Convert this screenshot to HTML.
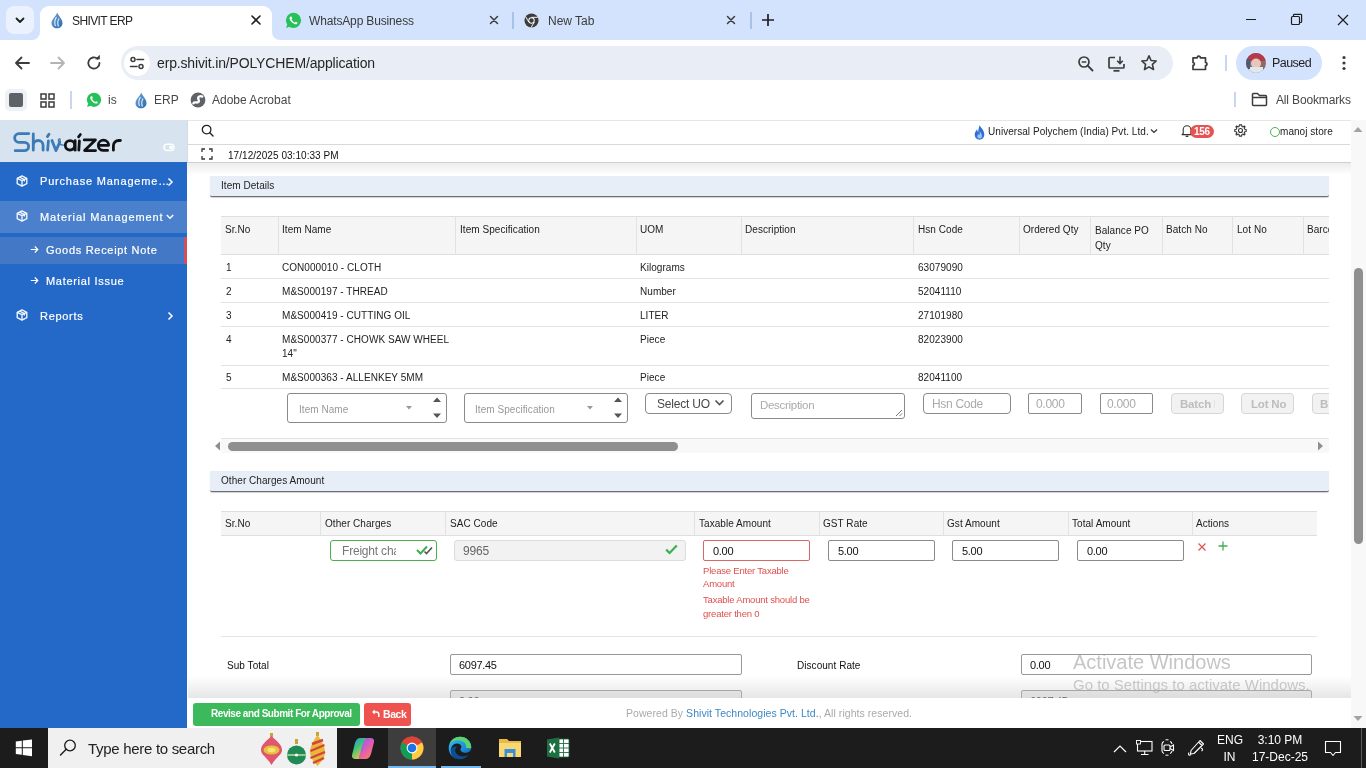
<!DOCTYPE html>
<html><head><meta charset="utf-8">
<style>
*{box-sizing:border-box;margin:0;padding:0}
html,body{width:1366px;height:768px;overflow:hidden;background:#fff;font-family:"Liberation Sans",sans-serif;position:relative;-webkit-font-smoothing:antialiased;will-change:transform}
.a{position:absolute}
#tabs{left:0;top:0;width:1366px;height:40px;background:#d3e3fd}
#toolbar{left:0;top:40px;width:1366px;height:45px;background:#fff}
#bmbar{left:0;top:85px;width:1366px;height:35px;background:#fff}
.ctext{color:#1f1f1f;font-size:13px;white-space:nowrap;line-height:15px}
#sidebar{left:0;top:120px;width:187px;height:608px;background:#2468c8;overflow:hidden}
.nav{color:#fff;font-size:11px;white-space:nowrap;line-height:14px;letter-spacing:0.75px;-webkit-text-stroke:0.2px #fff}
#main{left:187px;top:120px;width:1163px;height:608px;background:#fff;overflow:hidden}
#vscroll{left:1350px;top:120px;width:16px;height:608px;background:#f1f1f1}
#taskbar{left:0;top:728px;width:1366px;height:40px;background:#1c1c1c}
.t{font-size:10px;color:#222;white-space:nowrap;letter-spacing:0.05px;line-height:13px}
</style></head><body>
<!-- ===== CHROME TAB STRIP ===== -->
<div id="tabs" class="a">
  <div class="a" style="left:6px;top:6px;width:28px;height:28px;border-radius:8px;background:#ecf2fd"></div>
  <svg class="a" style="left:13px;top:13px" width="14" height="14" viewBox="0 0 14 14"><path d="M3.5 5.5 L7 9 L10.5 5.5" fill="none" stroke="#1f1f1f" stroke-width="1.8" stroke-linecap="round" stroke-linejoin="round"/></svg>
  <!-- active tab -->
  <div class="a" style="left:40px;top:6px;width:232px;height:34px;background:#fff;border-radius:9px 9px 0 0"></div>
  <div class="a" style="left:32px;top:32px;width:8px;height:8px;background:#fff"></div>
  <div class="a" style="left:32px;top:32px;width:8px;height:8px;background:#d3e3fd;border-radius:0 0 8px 0"></div>
  <div class="a" style="left:272px;top:32px;width:8px;height:8px;background:#fff"></div>
  <div class="a" style="left:272px;top:32px;width:8px;height:8px;background:#d3e3fd;border-radius:0 0 0 8px"></div>
  <svg class="a" style="left:51px;top:12px" width="12" height="17" viewBox="0 0 12 17"><defs><linearGradient id="dg" x1="0" y1="0" x2="1" y2="1"><stop offset="0" stop-color="#6fa3d6"/><stop offset="1" stop-color="#2d6cb0"/></linearGradient></defs><path d="M6.3 0.5 C7 3.5 11.5 7 11.5 11 C11.5 14.2 9.2 16.3 6 16.3 C2.8 16.3 0.5 14.2 0.5 11 C0.5 7.5 5 4 6.3 0.5Z" fill="url(#dg)"/><path d="M5.5 5 C3.5 8 3 10.5 4.5 14 M8 6.5 C6.5 9 6.2 11.5 7.5 14.5" fill="none" stroke="#e8f2fb" stroke-width="1.1"/></svg>
  <div class="a ctext" style="left:72px;top:14px;font-size:12px;letter-spacing:-0.6px;color:#262626">SHIVIT ERP</div>
  <svg class="a" style="left:250px;top:14px" width="12" height="12" viewBox="0 0 12 12"><path d="M2 2 L10 10 M10 2 L2 10" stroke="#1f1f1f" stroke-width="1.6" stroke-linecap="round"/></svg>
  <!-- whatsapp tab -->
  <svg class="a" style="left:285px;top:12px" width="17" height="17" viewBox="0 0 17 17"><circle cx="8.5" cy="8.3" r="7.6" fill="#25c15a"/><path d="M1.2 16 L2.3 12 L5 14.6Z" fill="#25c15a"/><path d="M5.6 4.4 C5 4.6 4.4 5.3 4.5 6.3 C4.7 8.4 7.6 11.7 10.4 12.3 C11.4 12.5 12.2 12 12.4 11.3 L12.4 10.6 L10.8 9.8 L9.9 10.7 C8.6 10.2 7 8.7 6.5 7.3 L7.3 6.4 L6.5 4.6Z" fill="#fff"/></svg>
  <div class="a ctext" style="left:309px;top:14px;font-size:12px;letter-spacing:-0.15px;color:#3a3a3a">WhatsApp Business</div>
  <svg class="a" style="left:488px;top:14px" width="12" height="12" viewBox="0 0 12 12"><path d="M2.5 2.5 L9.5 9.5 M9.5 2.5 L2.5 9.5" stroke="#3c3c3c" stroke-width="1.5" stroke-linecap="round"/></svg>
  <div class="a" style="left:512px;top:12px;width:2px;height:17px;background:#a8c1ea"></div>
  <!-- new tab -->
  <svg class="a" style="left:524px;top:13px" width="15" height="15" viewBox="0 0 16 16"><circle cx="8" cy="8" r="7.5" fill="#3c3c3c"/><circle cx="8" cy="8" r="3.4" fill="#fff"/><circle cx="8" cy="8" r="2.4" fill="#3c3c3c"/><path d="M8 4.6 L14.6 4.6" stroke="#fff" stroke-width="1"/><path d="M5.1 9.7 L1.8 4" stroke="#fff" stroke-width="1"/><path d="M10.9 9.7 L7.6 15.4" stroke="#fff" stroke-width="1"/></svg>
  <div class="a ctext" style="left:548px;top:14px;font-size:12px;color:#3a3a3a">New Tab</div>
  <svg class="a" style="left:725px;top:14px" width="12" height="12" viewBox="0 0 12 12"><path d="M2.5 2.5 L9.5 9.5 M9.5 2.5 L2.5 9.5" stroke="#3c3c3c" stroke-width="1.5" stroke-linecap="round"/></svg>
  <div class="a" style="left:750px;top:12px;width:2px;height:17px;background:#a8c1ea"></div>
  <svg class="a" style="left:761px;top:13px" width="14" height="14" viewBox="0 0 14 14"><path d="M7 1 L7 13 M1 7 L13 7" stroke="#1f1f1f" stroke-width="1.7"/></svg>
  <!-- window controls -->
  <div class="a" style="left:1246px;top:19px;width:10px;height:1px;background:#1f1f1f"></div>
  <svg class="a" style="left:1290px;top:13px" width="13" height="13" viewBox="0 0 13 13"><rect x="1.5" y="3.5" width="8" height="8" fill="none" stroke="#1f1f1f" stroke-width="1.2" rx="1"/><path d="M3.5 3.5 V2 A0.8 0.8 0 0 1 4.3 1.3 H10.8 A0.8 0.8 0 0 1 11.6 2 V8.7 A0.8 0.8 0 0 1 10.8 9.5 H9.5" fill="none" stroke="#1f1f1f" stroke-width="1.2"/></svg>
  <svg class="a" style="left:1336px;top:13px" width="14" height="14" viewBox="0 0 14 14"><path d="M2 2 L12 12 M12 2 L2 12" stroke="#1f1f1f" stroke-width="1.2"/></svg>
</div>
<!-- ===== TOOLBAR ===== -->
<div id="toolbar" class="a">
  <svg class="a" style="left:13px;top:14px" width="18" height="18" viewBox="0 0 18 18"><path d="M16 9 H3 M8.5 3.5 L3 9 L8.5 14.5" fill="none" stroke="#3c3c3c" stroke-width="1.8" stroke-linecap="round" stroke-linejoin="round"/></svg>
  <svg class="a" style="left:49px;top:14px" width="18" height="18" viewBox="0 0 18 18"><path d="M2 9 H15 M9.5 3.5 L15 9 L9.5 14.5" fill="none" stroke="#b4b4b4" stroke-width="1.8" stroke-linecap="round" stroke-linejoin="round"/></svg>
  <svg class="a" style="left:85px;top:14px" width="18" height="18" viewBox="0 0 18 18"><path d="M14.5 9 A5.6 5.6 0 1 1 12.6 4.8" fill="none" stroke="#3c3c3c" stroke-width="1.8" stroke-linecap="round"/><path d="M10.2 4 L14.8 4 L14.8 -0.5 Z" fill="#3c3c3c" transform="translate(0,1.3)"/></svg>
  <div class="a" style="left:121px;top:6px;width:1052px;height:34px;border-radius:17px;background:#e9eef6"></div>
  <div class="a" style="left:124px;top:10px;width:26px;height:26px;border-radius:13px;background:#fff"></div>
  <svg class="a" style="left:129px;top:15px" width="16" height="16" viewBox="0 0 16 16"><circle cx="4" cy="4.5" r="2" fill="none" stroke="#3c3c3c" stroke-width="1.5"/><path d="M8 4.5 H14.5" stroke="#3c3c3c" stroke-width="1.6" stroke-linecap="round"/><circle cx="12" cy="11.5" r="2" fill="none" stroke="#3c3c3c" stroke-width="1.5"/><path d="M1.5 11.5 H8" stroke="#3c3c3c" stroke-width="1.6" stroke-linecap="round"/></svg>
  <div class="a ctext" style="left:157px;top:16px;font-size:14px;letter-spacing:-0.15px;color:#262626">erp.shivit.in/POLYCHEM/application</div>
  <svg class="a" style="left:1077px;top:15px" width="18" height="18" viewBox="0 0 18 18"><circle cx="7" cy="7" r="5" fill="none" stroke="#3c3c3c" stroke-width="1.7"/><path d="M10.7 10.7 L15.5 15.5" stroke="#3c3c3c" stroke-width="1.9" stroke-linecap="round"/><path d="M4.7 7 H9.3" stroke="#3c3c3c" stroke-width="1.5"/></svg>
  <svg class="a" style="left:1107px;top:15px" width="20" height="18" viewBox="0 0 20 18"><path d="M8 2.5 H3 A1 1 0 0 0 2 3.5 V12 A1 1 0 0 0 3 13 H16 A1 1 0 0 0 17 12 V9" fill="none" stroke="#3c3c3c" stroke-width="1.7"/><path d="M13 1.5 V8.5 M10.2 5.8 L13 8.6 L15.8 5.8" fill="none" stroke="#3c3c3c" stroke-width="1.6"/><path d="M6.5 15.8 H12.5" stroke="#3c3c3c" stroke-width="1.8"/></svg>
  <svg class="a" style="left:1140px;top:14px" width="18" height="18" viewBox="0 0 18 18"><path d="M9 1.8 L11.1 6.5 L16.2 7 L12.4 10.4 L13.5 15.5 L9 12.9 L4.5 15.5 L5.6 10.4 L1.8 7 L6.9 6.5 Z" fill="none" stroke="#3c3c3c" stroke-width="1.6" stroke-linejoin="round"/></svg>
  <svg class="a" style="left:1190px;top:13px" width="19" height="19" viewBox="0 0 19 19"><path d="M3 4.8 H7.2 A1.6 1.6 0 0 1 10.4 4.8 H15.5 V9.5 A1.5 1.5 0 0 1 15.5 12.5 V16.5 H3 V12.3 A1.4 1.4 0 0 0 3 9.5 Z" fill="none" stroke="#3c3c3c" stroke-width="1.7" stroke-linejoin="round"/></svg>
  <div class="a" style="left:1225px;top:15px;width:2px;height:16px;background:#c7d7f2"></div>
  <div class="a" style="left:1236px;top:6px;width:86px;height:34px;border-radius:17px;background:#d3e3fd"></div>
  <svg class="a" style="left:1246px;top:13px" width="20" height="20" viewBox="0 0 20 20"><defs><clipPath id="av"><circle cx="10" cy="10" r="10"/></clipPath></defs><g clip-path="url(#av)"><rect width="20" height="20" fill="#8a6b66"/><rect x="0" y="0" width="20" height="8" fill="#b33a48"/><circle cx="10" cy="10.5" r="5" fill="#e8c7b8"/><rect x="3" y="14" width="14" height="7" fill="#dfe6ee"/><rect x="0" y="6" width="4" height="10" fill="#4a5a78"/></g></svg>
  <div class="a ctext" style="left:1272px;top:16px;font-size:12.5px;letter-spacing:-0.55px;color:#1f1f1f">Paused</div>
  <svg class="a" style="left:1340px;top:14px" width="8" height="18" viewBox="0 0 8 18"><circle cx="4" cy="3.5" r="1.6" fill="#3c3c3c"/><circle cx="4" cy="9" r="1.6" fill="#3c3c3c"/><circle cx="4" cy="14.5" r="1.6" fill="#3c3c3c"/></svg>
</div>
<!-- ===== BOOKMARKS BAR ===== -->
<div id="bmbar" class="a">
  <div class="a" style="left:5px;top:4px;width:22px;height:22px;border-radius:5px;background:#eef1f6"></div>
  <div class="a" style="left:9px;top:8px;width:14px;height:14px;border-radius:2px;background:#5f6368"></div>
  <svg class="a" style="left:40px;top:8px" width="15" height="15" viewBox="0 0 15 15"><rect x="1" y="1" width="5" height="5" fill="none" stroke="#3c3c3c" stroke-width="1.5"/><rect x="9" y="1" width="5" height="5" fill="none" stroke="#3c3c3c" stroke-width="1.5"/><rect x="1" y="9" width="5" height="5" fill="none" stroke="#3c3c3c" stroke-width="1.5"/><rect x="9" y="9" width="5" height="5" fill="none" stroke="#3c3c3c" stroke-width="1.5"/></svg>
  <div class="a" style="left:70px;top:6px;width:2px;height:18px;background:#c7d7f2"></div>
  <svg class="a" style="left:86px;top:7px" width="16" height="16" viewBox="0 0 17 17"><circle cx="8.5" cy="8.3" r="7.6" fill="#25c15a"/><path d="M1.2 16 L2.3 12 L5 14.6Z" fill="#25c15a"/><path d="M5.6 4.4 C5 4.6 4.4 5.3 4.5 6.3 C4.7 8.4 7.6 11.7 10.4 12.3 C11.4 12.5 12.2 12 12.4 11.3 L12.4 10.6 L10.8 9.8 L9.9 10.7 C8.6 10.2 7 8.7 6.5 7.3 L7.3 6.4 L6.5 4.6Z" fill="#fff"/></svg>
  <div class="a ctext" style="left:108px;top:8px;font-size:12px;color:#474747">is</div>
  <svg class="a" style="left:135px;top:7px" width="12" height="17" viewBox="0 0 12 17"><path d="M6.3 0.5 C7 3.5 11.5 7 11.5 11 C11.5 14.2 9.2 16.3 6 16.3 C2.8 16.3 0.5 14.2 0.5 11 C0.5 7.5 5 4 6.3 0.5Z" fill="url(#dg)"/><path d="M5.5 5 C3.5 8 3 10.5 4.5 14 M8 6.5 C6.5 9 6.2 11.5 7.5 14.5" fill="none" stroke="#e8f2fb" stroke-width="1.1"/></svg>
  <div class="a ctext" style="left:154px;top:8px;font-size:12px;color:#474747">ERP</div>
  <svg class="a" style="left:190px;top:7px" width="16" height="16" viewBox="0 0 16 16"><circle cx="8" cy="8" r="7.4" fill="#5f6368"/><path d="M12.3 4.6 C10.2 3.6 7.6 4.6 8.3 6.8 C8.9 8.6 9.6 9.8 7.6 10.4 C6 10.8 4.3 9.6 3.4 11.2" fill="none" stroke="#fff" stroke-width="2.3" stroke-linecap="round"/></svg>
  <div class="a ctext" style="left:212px;top:8px;font-size:12px;color:#474747">Adobe Acrobat</div>
  <div class="a" style="left:1234px;top:7px;width:2px;height:15px;background:#c7d7f2"></div>
  <svg class="a" style="left:1251px;top:7px" width="17" height="15" viewBox="0 0 17 15"><path d="M1.5 2.5 A1 1 0 0 1 2.5 1.5 H6.5 L8.5 3.5 H14.5 A1 1 0 0 1 15.5 4.5 V12.5 A1 1 0 0 1 14.5 13.5 H2.5 A1 1 0 0 1 1.5 12.5 Z M1.5 5.5 H15.5" fill="none" stroke="#3c3c3c" stroke-width="1.5" stroke-linejoin="round"/></svg>
  <div class="a ctext" style="left:1276px;top:8px;font-size:12px;letter-spacing:-0.15px;color:#474747">All Bookmarks</div>
</div>
<!-- ===== SIDEBAR ===== -->
<div id="sidebar" class="a">
  <div class="a" style="left:0;top:0;width:187px;height:42px;background:#d7e3ef"></div>
  <svg class="a" style="left:0;top:0" width="187" height="42" viewBox="0 0 187 42">
    <g fill="none" stroke="#3b7bb8" stroke-width="2.8" stroke-linecap="round" stroke-linejoin="round">
      <path d="M28.8 13.6 H19 A4.35 4.35 0 0 0 19 22.3 H24.4 A4.2 4.2 0 0 1 24.4 30.7 H15.2"/>
      <path d="M33.3 13.9 V30.2 M33.3 25.4 A4.9 4.9 0 0 1 43.1 25.4 V30.2"/>
      <path d="M48.4 21 L47.6 30.2"/>
      <path d="M47.4 16.6 L49 14.2"/>
      <path d="M52 20.5 L55.9 30.6 L59.8 22.2"/>
    </g>
    <path d="M59.8 22.2 C60.6 20 60 18.6 59.2 18.8 C58.2 19 57.8 21.2 59.5 23.5 C60.5 24.8 62 25.2 63.6 25.1" fill="none" stroke="#3b7bb8" stroke-width="1.3" stroke-linecap="round"/>
    <g fill="none" stroke="#111216" stroke-width="2.8" stroke-linecap="round" stroke-linejoin="round">
      <circle cx="70" cy="25.35" r="4.7"/>
      <path d="M75.1 20.7 V30.2"/>
      <path d="M79.4 20.9 L78.8 30.2"/>
      <path d="M78.6 16.8 L80.4 14.5"/>
      <path d="M84.2 19.9 H95.4 L84.6 30.6 H95.6"/>
      <path d="M98.3 25.3 H108.6 A5.15 5.15 0 1 0 103.4 30.45 H107.6"/>
      <path d="M113.4 30.2 V25.8 A5.3 5.3 0 0 1 118.7 20.5 H120.4"/>
    </g>
    <rect x="164" y="24.3" width="10" height="6.2" rx="3.1" fill="none" stroke="#fff" stroke-width="1.4"/>
    <circle cx="171" cy="27.4" r="1.8" fill="#fff"/>
  </svg>
  <!-- Purchase Management -->
  <svg class="a" style="left:16px;top:55px" width="12" height="12" viewBox="0 0 12 12"><path d="M6 0.9 L10.8 3.3 V8.7 L6 11.1 L1.2 8.7 V3.3 Z M1.2 3.3 L6 5.7 L10.8 3.3 M6 5.7 V11.1 M3.6 2.1 L8.4 4.5 V6.5" fill="none" stroke="#f2f6ff" stroke-width="1.35" stroke-linejoin="round"/></svg>
  <div class="a nav" style="left:40px;top:54px;letter-spacing:0.8px">Purchase Manageme…</div>
  <svg class="a" style="left:166px;top:57px" width="8" height="10" viewBox="0 0 8 10"><path d="M2.5 1.5 L6 5 L2.5 8.5" fill="none" stroke="#fff" stroke-width="1.5"/></svg>
  <!-- Material Management -->
  <div class="a" style="left:0;top:81px;width:187px;height:32px;background:#4a80cc"></div>
  <svg class="a" style="left:16px;top:90px" width="12" height="12" viewBox="0 0 12 12"><path d="M6 0.9 L10.8 3.3 V8.7 L6 11.1 L1.2 8.7 V3.3 Z M1.2 3.3 L6 5.7 L10.8 3.3 M6 5.7 V11.1 M3.6 2.1 L8.4 4.5 V6.5" fill="none" stroke="#f2f6ff" stroke-width="1.35" stroke-linejoin="round"/></svg>
  <div class="a nav" style="left:40px;top:90px;letter-spacing:0.9px">Material Management</div>
  <svg class="a" style="left:165px;top:92px" width="10" height="9" viewBox="0 0 10 9"><path d="M1.8 3 L5 6.2 L8.2 3" fill="none" stroke="#fff" stroke-width="1.5"/></svg>
  <!-- Goods Receipt Note -->
  <div class="a" style="left:0;top:117px;width:187px;height:27px;background:#4378c6"></div>
  <div class="a" style="left:184px;top:117px;width:3px;height:27px;background:#cf4f5a"></div>
  <svg class="a" style="left:30px;top:125px" width="9" height="9" viewBox="0 0 9 9"><path d="M0.8 4.5 H7.8 M4.8 1.5 L7.8 4.5 L4.8 7.5" fill="none" stroke="#fff" stroke-width="1.2"/></svg>
  <div class="a nav" style="left:46px;top:123px;letter-spacing:0.7px">Goods Receipt Note</div>
  <!-- Material Issue -->
  <svg class="a" style="left:30px;top:156px" width="9" height="9" viewBox="0 0 9 9"><path d="M0.8 4.5 H7.8 M4.8 1.5 L7.8 4.5 L4.8 7.5" fill="none" stroke="#fff" stroke-width="1.2"/></svg>
  <div class="a nav" style="left:46px;top:154px;letter-spacing:0.7px">Material Issue</div>
  <!-- Reports -->
  <svg class="a" style="left:16px;top:189px" width="12" height="12" viewBox="0 0 12 12"><path d="M6 0.9 L10.8 3.3 V8.7 L6 11.1 L1.2 8.7 V3.3 Z M1.2 3.3 L6 5.7 L10.8 3.3 M6 5.7 V11.1 M3.6 2.1 L8.4 4.5 V6.5" fill="none" stroke="#f2f6ff" stroke-width="1.35" stroke-linejoin="round"/></svg>
  <div class="a nav" style="left:40px;top:189px;letter-spacing:0.7px">Reports</div>
  <svg class="a" style="left:166px;top:191px" width="8" height="10" viewBox="0 0 8 10"><path d="M2.5 1.5 L6 5 L2.5 8.5" fill="none" stroke="#fff" stroke-width="1.5"/></svg>
</div>
<!-- ===== MAIN HEADER ===== -->
<div class="a" style="left:187px;top:120px;width:1164px;height:42px;background:#fff"></div>
<div class="a" style="left:187px;top:120px;width:1164px;height:1px;background:#e6e6e6"></div>
<div class="a" style="left:187px;top:120px;width:1px;height:42px;background:#d5dbe2"></div>
<div class="a" style="left:187px;top:144px;width:1163px;height:1px;background:#d9d9d9"></div>
<div class="a" style="left:187px;top:162px;width:1164px;height:1px;background:#cfcfcf"></div>
<div class="a" style="left:187px;top:163px;width:1164px;height:12px;background:linear-gradient(#ececec,rgba(255,255,255,0))"></div>
<svg class="a" style="left:201px;top:124px" width="13" height="13" viewBox="0 0 13 13"><circle cx="5.6" cy="5.6" r="4.3" fill="none" stroke="#222" stroke-width="1.3"/><path d="M8.8 8.8 L12 12" stroke="#222" stroke-width="1.4" stroke-linecap="round"/></svg>
<svg class="a" style="left:201px;top:148px" width="12" height="12" viewBox="0 0 12 12"><path d="M1 4 V1 H4 M8 1 H11 V4 M11 8 V11 H8 M4 11 H1 V8" fill="none" stroke="#333" stroke-width="1.3"/></svg>
<div class="a t" style="left:228px;top:149px;color:#111">17/12/2025 03:10:33 PM</div>
<svg class="a" style="left:974px;top:125px" width="11" height="15" viewBox="0 0 11 15"><path d="M5.5 0.3 C6.5 2.5 10.3 5.3 10.3 9.6 C10.3 12.6 8.2 14.7 5.5 14.7 C2.8 14.7 0.7 12.6 0.7 9.6 C0.7 7 2.5 5.6 3 4.3 C3.4 6 3.8 6.8 4.2 7.2 C4.2 4.8 5 2.6 5.5 0.3Z" fill="#2f6fd6"/><path d="M5.8 6 C6.7 7.8 8 9 8 10.9 C8 12.6 6.9 13.6 5.6 13.6 C4.3 13.6 3.3 12.7 3.3 11.4 C3.3 10 4.2 9.5 4.6 8.7 C5 9.6 5.4 9.8 5.6 9.9 C5.6 8.7 5.6 7.3 5.8 6Z" fill="#9cc0f0"/></svg>
<div class="a t" style="left:988px;top:125px;color:#222">Universal Polychem (India) Pvt. Ltd.</div>
<svg class="a" style="left:1150px;top:128px" width="8" height="6" viewBox="0 0 8 6"><path d="M1 1.5 L4 4.5 L7 1.5" fill="none" stroke="#333" stroke-width="1.2"/></svg>
<svg class="a" style="left:1181px;top:124px" width="12" height="13" viewBox="0 0 12 13"><path d="M2.2 9.5 V5.6 A3.8 3.8 0 0 1 9.8 5.6 V9.5 L11 10.6 H1 Z M4.8 11.8 A1.3 1.3 0 0 0 7.2 11.8" fill="none" stroke="#333" stroke-width="1.1" stroke-linejoin="round"/></svg>
<div class="a" style="left:1190px;top:125px;width:24px;height:13px;border-radius:6.5px;background:#e65353;color:#fff;font-size:10px;font-weight:bold;line-height:13px;text-align:center;letter-spacing:-0.3px">156</div>
<svg class="a" style="left:1234px;top:124px" width="13" height="13" viewBox="0 0 13 13"><path d="M6.5 0.8 L7.6 0.9 L7.9 2.4 L9.1 2.9 L10.3 2 L11.1 2.8 L10.2 4 L10.7 5.2 L12.2 5.5 V7.5 L10.7 7.8 L10.2 9 L11.1 10.2 L10.3 11 L9.1 10.1 L7.9 10.6 L7.6 12.1 H5.4 L5.1 10.6 L3.9 10.1 L2.7 11 L1.9 10.2 L2.8 9 L2.3 7.8 L0.8 7.5 V5.5 L2.3 5.2 L2.8 4 L1.9 2.8 L2.7 2 L3.9 2.9 L5.1 2.4 L5.4 0.9 Z" fill="none" stroke="#333" stroke-width="1.1" stroke-linejoin="round"/><circle cx="6.5" cy="6.5" r="2" fill="none" stroke="#333" stroke-width="1.1"/></svg>
<div class="a" style="left:1270px;top:127px;width:10px;height:10px;border-radius:5px;border:1.2px solid #4cb050"></div>
<div class="a t" style="left:1280px;top:125px;color:#222">manoj store</div>
<!-- page scrollbar -->
<div class="a" style="left:1351px;top:120px;width:15px;height:608px;background:#f8f8f8"></div>
<svg class="a" style="left:1353px;top:126px" width="10" height="7" viewBox="0 0 10 7"><path d="M0.5 6 L5 1 L9.5 6Z" fill="#a3a3a3"/></svg>
<div class="a" style="left:1354px;top:268px;width:9px;height:276px;border-radius:4.5px;background:#8f8f8f"></div>
<svg class="a" style="left:1353px;top:715px" width="10" height="7" viewBox="0 0 10 7"><path d="M0.5 1 L5 6 L9.5 1Z" fill="#a3a3a3"/></svg>

<!-- ===== ITEM DETAILS ===== -->
<div class="a" style="left:210px;top:176px;width:1119px;height:21px;background:#e8eef8;border-bottom:1px solid #6a6d72;border-radius:0 0 2px 2px;box-shadow:0 1px 1px rgba(0,0,0,0.18)"></div>
<div class="a t" style="left:221px;top:179px;color:#222">Item Details</div>

<div class="a" style="left:221px;top:216px;width:1108px;height:237px;overflow:hidden">
  <!-- header -->
  <div class="a" style="left:0;top:0;width:1120px;height:39px;background:#f5f5f5;border-top:1px solid #dedede;border-bottom:1px solid #dedede"></div>
  <div class="a" style="left:57px;top:0;width:1px;height:39px;background:#e2e2e2"></div>
  <div class="a" style="left:234px;top:0;width:1px;height:39px;background:#e2e2e2"></div>
  <div class="a" style="left:415px;top:0;width:1px;height:39px;background:#e2e2e2"></div>
  <div class="a" style="left:520px;top:0;width:1px;height:39px;background:#e2e2e2"></div>
  <div class="a" style="left:692px;top:0;width:1px;height:39px;background:#e2e2e2"></div>
  <div class="a" style="left:798px;top:0;width:1px;height:39px;background:#e2e2e2"></div>
  <div class="a" style="left:869px;top:0;width:1px;height:39px;background:#e2e2e2"></div>
  <div class="a" style="left:941px;top:0;width:1px;height:39px;background:#e2e2e2"></div>
  <div class="a" style="left:1011px;top:0;width:1px;height:39px;background:#e2e2e2"></div>
  <div class="a" style="left:1082px;top:0;width:1px;height:39px;background:#e2e2e2"></div>
  <div class="a t" style="left:4px;top:7px">Sr.No</div>
  <div class="a t" style="left:61px;top:7px">Item Name</div>
  <div class="a t" style="left:239px;top:7px">Item Specification</div>
  <div class="a t" style="left:419px;top:7px">UOM</div>
  <div class="a t" style="left:524px;top:7px">Description</div>
  <div class="a t" style="left:697px;top:7px">Hsn Code</div>
  <div class="a t" style="left:802px;top:7px">Ordered Qty</div>
  <div class="a t" style="left:874px;top:7px;line-height:15px">Balance PO<br>Qty</div>
  <div class="a t" style="left:945px;top:7px">Batch No</div>
  <div class="a t" style="left:1016px;top:7px">Lot No</div>
  <div class="a t" style="left:1086px;top:7px">Barcode</div>
  <!-- rows -->
  <div class="a" style="left:0;top:62px;width:1120px;height:1px;background:#e2e2e2"></div>
  <div class="a" style="left:0;top:86px;width:1120px;height:1px;background:#e2e2e2"></div>
  <div class="a" style="left:0;top:110px;width:1120px;height:1px;background:#e2e2e2"></div>
  <div class="a" style="left:0;top:149px;width:1120px;height:1px;background:#e2e2e2"></div>
  <div class="a" style="left:0;top:172px;width:1120px;height:1px;background:#e2e2e2"></div>

  <div class="a t" style="left:5px;top:45px">1</div>
  <div class="a t" style="left:61px;top:45px">CON000010 - CLOTH</div>
  <div class="a t" style="left:419px;top:45px">Kilograms</div>
  <div class="a t" style="left:697px;top:45px">63079090</div>

  <div class="a t" style="left:5px;top:69px">2</div>
  <div class="a t" style="left:61px;top:69px">M&amp;S000197 - THREAD</div>
  <div class="a t" style="left:419px;top:69px">Number</div>
  <div class="a t" style="left:697px;top:69px">52041110</div>

  <div class="a t" style="left:5px;top:93px">3</div>
  <div class="a t" style="left:61px;top:93px">M&amp;S000419 - CUTTING OIL</div>
  <div class="a t" style="left:419px;top:93px">LITER</div>
  <div class="a t" style="left:697px;top:93px">27101980</div>

  <div class="a t" style="left:5px;top:117px">4</div>
  <div class="a t" style="left:61px;top:117px;line-height:14px">M&amp;S000377 - CHOWK SAW WHEEL<br>14"</div>
  <div class="a t" style="left:419px;top:117px">Piece</div>
  <div class="a t" style="left:697px;top:117px">82023900</div>

  <div class="a t" style="left:5px;top:155px">5</div>
  <div class="a t" style="left:61px;top:155px">M&amp;S000363 - ALLENKEY 5MM</div>
  <div class="a t" style="left:419px;top:155px">Piece</div>
  <div class="a t" style="left:697px;top:155px">82041100</div>

  <!-- input row -->
  <div class="a" style="left:66px;top:177px;width:160px;height:30px;border:1px solid #8a8a8a;border-radius:3px"></div>
  <div class="a t" style="left:78px;top:187px;color:#999">Item Name</div>
  <svg class="a" style="left:185px;top:190px" width="6" height="4" viewBox="0 0 6 4"><path d="M0 0 H6 L3 3.5Z" fill="#999"/></svg>
  <svg class="a" style="left:211px;top:180px" width="10" height="24" viewBox="0 0 10 24"><path d="M1 6 L5 1.5 L9 6Z M1 17.5 L5 22 L9 17.5Z" fill="#555"/></svg>
  <div class="a" style="left:243px;top:177px;width:164px;height:30px;border:1px solid #8a8a8a;border-radius:3px"></div>
  <div class="a t" style="left:254px;top:187px;color:#999">Item Specification</div>
  <svg class="a" style="left:366px;top:190px" width="6" height="4" viewBox="0 0 6 4"><path d="M0 0 H6 L3 3.5Z" fill="#999"/></svg>
  <svg class="a" style="left:392px;top:180px" width="10" height="24" viewBox="0 0 10 24"><path d="M1 6 L5 1.5 L9 6Z M1 17.5 L5 22 L9 17.5Z" fill="#555"/></svg>
  <div class="a" style="left:424px;top:177px;width:87px;height:21px;border:1px solid #8a8a8a;border-radius:4px"></div>
  <div class="a" style="left:436px;top:181px;font-size:12px;color:#484848;white-space:nowrap;line-height:14px;letter-spacing:-0.2px">Select UO</div>
  <svg class="a" style="left:493px;top:183px" width="11" height="8" viewBox="0 0 11 8"><path d="M1.5 1.5 L5.5 5.5 L9.5 1.5" fill="none" stroke="#555" stroke-width="1.7"/></svg>
  <div class="a" style="left:530px;top:177px;width:154px;height:26px;border:1px solid #8a8a8a;border-radius:3px"></div>
  <div class="a" style="left:539px;top:182px;font-size:11.5px;color:#aaa;white-space:nowrap;line-height:14px;letter-spacing:-0.3px">Description</div>
  <svg class="a" style="left:674px;top:193px" width="8" height="8" viewBox="0 0 8 8"><path d="M7 1 L1 7 M7 4.5 L4.5 7" stroke="#777" stroke-width="1"/></svg>
  <div class="a" style="left:702px;top:177px;width:88px;height:21px;border:1px solid #8a8a8a;border-radius:4px"></div>
  <div class="a" style="left:711px;top:181px;font-size:12px;color:#aaa;white-space:nowrap;line-height:14px;letter-spacing:-0.3px">Hsn Code</div>
  <div class="a" style="left:807px;top:177px;width:54px;height:21px;border:1px solid #8a8a8a;border-radius:2px"></div>
  <div class="a" style="left:815px;top:181px;font-size:12px;color:#aaa;white-space:nowrap;line-height:14px;letter-spacing:-0.3px">0.000</div>
  <div class="a" style="left:879px;top:177px;width:53px;height:21px;border:1px solid #8a8a8a;border-radius:2px"></div>
  <div class="a" style="left:886px;top:181px;font-size:12px;color:#aaa;white-space:nowrap;line-height:14px;letter-spacing:-0.3px">0.000</div>
  <div class="a" style="left:950px;top:177px;width:53px;height:21px;border:1px solid #d6d6d6;border-radius:4px;background:#f2f2f2"></div>
  <div class="a" style="left:959px;top:181px;width:35px;height:15px;overflow:hidden"><div style="font-size:11.5px;color:#bdbdbd;font-weight:bold;white-space:nowrap;line-height:14px;letter-spacing:-0.2px">Batch No</div></div>
  <div class="a" style="left:1020px;top:177px;width:53px;height:21px;border:1px solid #d6d6d6;border-radius:4px;background:#f2f2f2"></div>
  <div class="a" style="left:1030px;top:181px;font-size:11.5px;color:#bdbdbd;font-weight:bold;white-space:nowrap;line-height:14px;letter-spacing:-0.2px">Lot No</div>
  <div class="a" style="left:1091px;top:177px;width:53px;height:21px;border:1px solid #d6d6d6;border-radius:4px;background:#f2f2f2"></div>
  <div class="a" style="left:1099px;top:181px;font-size:11.5px;color:#bdbdbd;font-weight:bold;white-space:nowrap;line-height:14px">B</div>
  <!-- h scrollbar -->
  <div class="a" style="left:-11px;top:222px;width:1130px;height:15px;background:#f8f8f8;border-top:1px solid #e4e4e4"></div>
  <div class="a" style="left:7px;top:226px;width:450px;height:9px;border-radius:4.5px;background:#8f8f8f"></div>
</div>
<svg class="a" style="left:214px;top:441px" width="7" height="10" viewBox="0 0 7 10"><path d="M6 0.5 L1 5 L6 9.5Z" fill="#8f8f8f"/></svg>
<svg class="a" style="left:1317px;top:441px" width="7" height="10" viewBox="0 0 7 10"><path d="M1 0.5 L6 5 L1 9.5Z" fill="#8f8f8f"/></svg>
<!-- ===== OTHER CHARGES ===== -->
<div class="a" style="left:210px;top:471px;width:1119px;height:21px;background:#e8eef8;border-bottom:1px solid #6a6d72;border-radius:0 0 2px 2px;box-shadow:0 1px 1px rgba(0,0,0,0.18)"></div>
<div class="a t" style="left:221px;top:474px;color:#222">Other Charges Amount</div>
<div class="a" style="left:221px;top:511px;width:1096px;height:25px;background:#f5f5f5;border-top:1px solid #dedede;border-bottom:1px solid #dedede"></div>
<div class="a" style="left:320px;top:511px;width:1px;height:25px;background:#e2e2e2"></div>
<div class="a" style="left:445px;top:511px;width:1px;height:25px;background:#e2e2e2"></div>
<div class="a" style="left:694px;top:511px;width:1px;height:25px;background:#e2e2e2"></div>
<div class="a" style="left:819px;top:511px;width:1px;height:25px;background:#e2e2e2"></div>
<div class="a" style="left:943px;top:511px;width:1px;height:25px;background:#e2e2e2"></div>
<div class="a" style="left:1068px;top:511px;width:1px;height:25px;background:#e2e2e2"></div>
<div class="a" style="left:1192px;top:511px;width:1px;height:25px;background:#e2e2e2"></div>
<div class="a t" style="left:225px;top:517px">Sr.No</div>
<div class="a t" style="left:325px;top:517px">Other Charges</div>
<div class="a t" style="left:450px;top:517px">SAC Code</div>
<div class="a t" style="left:699px;top:517px">Taxable Amount</div>
<div class="a t" style="left:823px;top:517px">GST Rate</div>
<div class="a t" style="left:947px;top:517px">Gst Amount</div>
<div class="a t" style="left:1072px;top:517px">Total Amount</div>
<div class="a t" style="left:1196px;top:517px">Actions</div>

<div class="a" style="left:330px;top:540px;width:107px;height:21px;border:1px solid #4cae4c;border-radius:3px;background:#fff"></div>
<div class="a" style="left:342px;top:544px;font-size:12px;color:#777;white-space:nowrap;line-height:14px;letter-spacing:-0.2px;width:54px;overflow:hidden">Freight charges</div>
<svg class="a" style="left:416px;top:545px" width="17" height="10" viewBox="0 0 17 10"><path d="M1 5 L4.5 8.5 L11 1.5" fill="none" stroke="#3cb050" stroke-width="2"/><path d="M8.5 6.5 L10.5 8.5 L16 2.5" fill="none" stroke="#555" stroke-width="1.6"/></svg>
<div class="a" style="left:454px;top:540px;width:232px;height:21px;border:1px solid #dcdcdc;border-radius:3px;background:#f2f2f2"></div>
<div class="a" style="left:463px;top:544px;font-size:12px;color:#666;white-space:nowrap;line-height:14px;letter-spacing:-0.2px">9965</div>
<svg class="a" style="left:665px;top:544px" width="13" height="11" viewBox="0 0 13 11"><path d="M1.2 5.6 L4.6 9 L11.8 1.5" fill="none" stroke="#3cb050" stroke-width="2.2"/></svg>
<div class="a" style="left:703px;top:540px;width:107px;height:21px;border:1px solid #d46868;border-radius:2px;background:#fff"></div>
<div class="a" style="left:713px;top:544px;font-size:11px;color:#111;white-space:nowrap;line-height:14px;letter-spacing:-0.3px">0.00</div>
<div class="a" style="left:828px;top:540px;width:107px;height:21px;border:1px solid #8a8a8a;border-radius:2px;background:#fff"></div>
<div class="a" style="left:838px;top:544px;font-size:11px;color:#111;white-space:nowrap;line-height:14px;letter-spacing:-0.3px">5.00</div>
<div class="a" style="left:952px;top:540px;width:107px;height:21px;border:1px solid #8a8a8a;border-radius:2px;background:#fff"></div>
<div class="a" style="left:962px;top:544px;font-size:11px;color:#111;white-space:nowrap;line-height:14px;letter-spacing:-0.3px">5.00</div>
<div class="a" style="left:1077px;top:540px;width:107px;height:21px;border:1px solid #8a8a8a;border-radius:2px;background:#fff"></div>
<div class="a" style="left:1087px;top:544px;font-size:11px;color:#111;white-space:nowrap;line-height:14px;letter-spacing:-0.3px">0.00</div>
<svg class="a" style="left:1197px;top:542px" width="10" height="10" viewBox="0 0 10 10"><path d="M1.5 1.5 L8.5 8.5 M8.5 1.5 L1.5 8.5" stroke="#e05555" stroke-width="1.3"/></svg>
<svg class="a" style="left:1218px;top:541px" width="10" height="10" viewBox="0 0 10 10"><path d="M5 0.5 V9.5 M0.5 5 H9.5" stroke="#3cb050" stroke-width="1.3"/></svg>
<div class="a" style="left:703px;top:564px;font-size:9.5px;color:#e0504f;line-height:13px;letter-spacing:-0.2px;white-space:nowrap">Please Enter Taxable<br>Amount</div>
<div class="a" style="left:703px;top:593px;font-size:9.5px;color:#e0504f;line-height:13.5px;letter-spacing:-0.2px;white-space:nowrap">Taxable Amount should be<br>greater then 0</div>
<div class="a" style="left:221px;top:636px;width:1096px;height:1px;background:#e4e4e4"></div>

<!-- totals -->
<div class="a t" style="left:227px;top:659px;color:#111">Sub Total</div>
<div class="a" style="left:450px;top:654px;width:292px;height:21px;border:1px solid #999;border-radius:2px;background:#fff"></div>
<div class="a" style="left:459px;top:658px;font-size:11px;color:#111;white-space:nowrap;line-height:14px;letter-spacing:-0.3px">6097.45</div>
<div class="a t" style="left:797px;top:659px;color:#111">Discount Rate</div>
<div class="a" style="left:1021px;top:654px;width:291px;height:21px;border:1px solid #999;border-radius:2px;background:#fff"></div>
<div class="a" style="left:1030px;top:658px;font-size:11px;color:#111;white-space:nowrap;line-height:14px;letter-spacing:-0.3px">0.00</div>
<div class="a" style="left:450px;top:690px;width:292px;height:21px;border:1px solid #999;border-radius:2px;background:#eee"></div>
<div class="a" style="left:459px;top:694px;font-size:11px;color:#111;white-space:nowrap;line-height:14px;letter-spacing:-0.3px">0.00</div>
<div class="a" style="left:1021px;top:690px;width:291px;height:21px;border:1px solid #999;border-radius:2px;background:#eee"></div>
<div class="a" style="left:1030px;top:694px;font-size:11px;color:#111;white-space:nowrap;line-height:14px;letter-spacing:-0.3px">6097.45</div>

<!-- Activate windows -->
<div class="a" style="left:1073px;top:650px;font-size:20px;color:rgba(150,150,150,0.55);white-space:nowrap;line-height:24px">Activate Windows</div>
<div class="a" style="left:1073px;top:676px;font-size:15px;color:rgba(150,150,150,0.55);white-space:nowrap;line-height:18px">Go to Settings to activate Windows.</div>

<!-- footer -->
<div class="a" style="left:188px;top:676px;width:1163px;height:22px;background:linear-gradient(rgba(255,255,255,0),rgba(200,200,200,0.45))"></div>
<div class="a" style="left:188px;top:698px;width:1163px;height:30px;background:#fff"></div>
<div class="a" style="left:193px;top:703px;width:167px;height:23px;border-radius:3px;background:#3cb95a"></div>
<div class="a" style="left:211px;top:708px;font-size:10px;font-weight:bold;color:#fff;white-space:nowrap;line-height:12px;letter-spacing:-0.45px">Revise and Submit For Approval</div>
<div class="a" style="left:364px;top:703px;width:47px;height:23px;border-radius:3px;background:#ef5350"></div>
<svg class="a" style="left:371px;top:709px" width="9" height="8" viewBox="0 0 9 8"><path d="M1 3 L3.8 0.5 V5.5 Z" fill="#fff"/><path d="M3 3 H5.3 A2.5 2.5 0 0 1 7.8 5.5 V8" fill="none" stroke="#fff" stroke-width="1.5"/></svg>
<div class="a" style="left:383px;top:708px;font-size:10.5px;font-weight:bold;color:#fff;white-space:nowrap;line-height:12px;letter-spacing:-0.4px">Back</div>
<div class="a" style="left:626px;top:707px;font-size:10.5px;color:#aaa;white-space:nowrap;line-height:13px;letter-spacing:0.05px">Powered By <span style="color:#3d88c8">Shivit Technologies Pvt. Ltd.</span>, All rights reserved.</div>
<!-- ===== TASKBAR ===== -->
<div id="taskbar" class="a">
  <svg class="a" style="left:15px;top:11px" width="18" height="18" viewBox="0 0 18 18"><path d="M0.8 2.6 L6.8 1.8 V8.3 H0.8 Z M7.8 1.6 L17 0.4 V8.3 H7.8 Z M0.8 9.3 H6.8 V15.8 L0.8 15 Z M7.8 9.3 H17 V17.2 L7.8 16 Z" fill="#fff"/></svg>
  <div class="a" style="left:48px;top:0;width:289px;height:40px;background:#f0f0f0"></div>
  <svg class="a" style="left:59px;top:11px" width="18" height="18" viewBox="0 0 18 18"><circle cx="11" cy="6.5" r="5.3" fill="none" stroke="#1a1a1a" stroke-width="1.3"/><path d="M7.2 10.3 L1.5 16" stroke="#1a1a1a" stroke-width="1.4" stroke-linecap="round"/></svg>
  <div class="a" style="left:88px;top:12px;font-size:15px;color:#222;white-space:nowrap;line-height:18px;letter-spacing:-0.3px">Type here to search</div>
  <!-- ornaments -->
  <svg class="a" style="left:259px;top:3px" width="78" height="36" viewBox="0 0 78 36">
    <rect x="11" y="2" width="3" height="4" fill="#c9a23a"/>
    <path d="M12.5 5 C9 9 2 13 2 19 C2 24 8 26 12.5 34 C17 26 23 24 23 19 C23 13 16 9 12.5 5Z" fill="#e0566f"/>
    <ellipse cx="12.5" cy="19" rx="8" ry="4.5" fill="#e6c23a"/>
    <ellipse cx="12.5" cy="19" rx="4" ry="2.3" fill="#f7e27a"/>
    <rect x="36" y="8" width="3" height="5" fill="#c9a23a"/>
    <circle cx="37.5" cy="24" r="9.5" fill="#1f8a54"/>
    <path d="M28.3 24 H46.7" stroke="#d8e6b0" stroke-width="1.3"/>
    <circle cx="37.5" cy="24" r="1.6" fill="#fff"/>
    <rect x="57" y="1" width="3" height="4" fill="#c9a23a"/>
    <path d="M58.5 4 C54 10 51 16 51 21 C51 27 55 31 58.5 35 C62 31 66 27 66 21 C66 16 63 10 58.5 4Z" fill="#e9b83a"/>
    <path d="M53 13 L64 9 M51.5 20 L65.5 14 M51.5 27 L66 21 M54 32 L65 27" stroke="#d2453a" stroke-width="2.4"/>
  </svg>
  <!-- copilot -->
  <svg class="a" style="left:351px;top:9px" width="24" height="23" viewBox="0 0 24 23">
    <defs><linearGradient id="cpg1" x1="0" y1="0" x2="0.6" y2="1"><stop offset="0" stop-color="#2f8ff0"/><stop offset="0.45" stop-color="#3cc47a"/><stop offset="1" stop-color="#f2c744"/></linearGradient>
    <linearGradient id="cpg2" x1="0.3" y1="0" x2="1" y2="1"><stop offset="0" stop-color="#9a5cf0"/><stop offset="0.5" stop-color="#e95fa8"/><stop offset="1" stop-color="#f7904a"/></linearGradient></defs>
    <path d="M9 1 H14.5 C16 1 16.5 2 16 3.5 L11.5 18 C11 20 9.5 22 7 22 H4.5 C2 22 0.5 20.5 1 18 L3.5 8 C4.5 4 6 1 9 1Z" fill="url(#cpg1)"/>
    <path d="M15 22 H9.5 C8 22 7.5 21 8 19.5 L12.5 5 C13 3 14.5 1 17 1 H19.5 C22 1 23.5 2.5 23 5 L20.5 15 C19.5 19 18 22 15 22Z" fill="url(#cpg2)"/>
    <path d="M12.5 5 L10 13 C9.5 14.5 10.5 15 11.5 14 L13 8Z" fill="#7b6ff0" opacity="0.7"/>
  </svg>
  <!-- chrome active -->
  <div class="a" style="left:388px;top:0;width:48px;height:40px;background:#3d3d3d"></div>
  <div class="a" style="left:388px;top:38px;width:48px;height:2px;background:#76b9ed"></div>
  <svg class="a" style="left:400px;top:8px" width="24" height="24" viewBox="0 0 24 24">
    <circle cx="12" cy="12" r="11.5" fill="#db4437"/>
    <path d="M12 12 L2.05 6.25 A11.5 11.5 0 0 0 12 23.5 Z" fill="#0f9d58"/>
    <path d="M12 12 L12 23.5 A11.5 11.5 0 0 0 21.95 6.25 Z" fill="#ffcd40"/>
    <path d="M12 12 L2.05 6.25 A11.5 11.5 0 0 1 21.95 6.25 Z" fill="#db4437"/>
    <circle cx="12" cy="12" r="5.4" fill="#fff"/>
    <circle cx="12" cy="12" r="4.3" fill="#1a73e8"/>
  </svg>
  <!-- edge -->
  <div class="a" style="left:441px;top:38px;width:40px;height:2px;background:#76b9ed"></div>
  <svg class="a" style="left:448px;top:8px" width="24" height="24" viewBox="0 0 24 24">
    <defs><linearGradient id="edg" x1="0" y1="0" x2="1" y2="1"><stop offset="0" stop-color="#35c1f1"/><stop offset="0.6" stop-color="#1b8ad9"/><stop offset="1" stop-color="#0c59a4"/></linearGradient></defs>
    <path d="M12 0.7 C18.5 0.7 23.3 5.6 23.3 11.5 C23.3 15 20.5 16.8 17.3 16.8 C14.3 16.8 12.5 15.3 12.5 13.5 C12.5 12.6 13.2 12 13.4 11.2 C13.6 9 11.5 7.5 9 7.5 C5.2 7.5 2.8 10.8 2.8 14.5 C2.8 19.5 7.3 23.3 12 23.3 C6 23.3 0.7 18.5 0.7 12 C0.7 5.8 5.7 0.7 12 0.7Z" fill="url(#edg)"/>
    <path d="M23.3 11.5 C23.3 5.6 18.5 0.7 12 0.7 C7 0.7 3 3.8 1.5 8 C3.5 5.5 6.5 4.2 9.5 4.2 C15 4.2 18 7.5 18 10 C18 11 17.5 11.5 17.5 11.5 C20.5 12.5 23.3 12.5 23.3 11.5Z" fill="#5dd36e"/>
    <path d="M2.8 14.5 C2.8 19.5 7.3 23.3 12 23.3 C15.5 23.3 18.5 21.5 20.2 19 C18 20.2 15.5 20.6 13.5 20.3 C9.5 19.8 7.2 17 7.2 14.3 C7.2 12.5 8.5 11 9.5 10.5 C6 10 2.8 12 2.8 14.5Z" fill="#0a4f94"/>
  </svg>
  <!-- file explorer -->
  <svg class="a" style="left:498px;top:9px" width="24" height="22" viewBox="0 0 24 22">
    <path d="M1 2 H9 L11 4 H23 V20 H1 Z" fill="#e9b847"/>
    <rect x="1" y="6" width="22" height="14" fill="#f8d775"/>
    <rect x="6.5" y="12" width="11" height="8" fill="#3a8fd6"/>
    <rect x="9" y="16" width="6" height="4" fill="#f8d775"/>
  </svg>
  <!-- excel -->
  <svg class="a" style="left:546px;top:8px" width="24" height="24" viewBox="0 0 24 24">
    <rect x="9" y="3" width="14" height="18" rx="1" fill="#fff" stroke="#1d6f42" stroke-width="0.8"/>
    <path d="M13 3 V21 M17.5 3 V21 M9 7.5 H23 M9 12 H23 M9 16.5 H23" stroke="#1d6f42" stroke-width="0.9"/>
    <path d="M1 3.5 L13 1.5 V22.5 L1 20.5 Z" fill="#1d6f42"/>
    <path d="M3.8 7.5 L8.8 16.5 M8.8 7.5 L3.8 16.5" stroke="#fff" stroke-width="1.8"/>
  </svg>
  <!-- tray -->
  <svg class="a" style="left:1113px;top:16px" width="14" height="9" viewBox="0 0 14 9"><path d="M1 8 L7 2 L13 8" fill="none" stroke="#fff" stroke-width="1.2"/></svg>
  <svg class="a" style="left:1136px;top:12px" width="17" height="16" viewBox="0 0 17 16"><rect x="1.5" y="1.5" width="14.5" height="9.5" fill="none" stroke="#fff" stroke-width="1.1"/><path d="M8.7 11 V14 M5 14.5 H12.5" stroke="#fff" stroke-width="1.1"/><rect x="0.5" y="0.5" width="4" height="3.5" fill="#1c1c1c" stroke="#fff" stroke-width="0.9"/></svg>
  <svg class="a" style="left:1161px;top:11px" width="14" height="17" viewBox="0 0 14 17"><path d="M3 2.5 A3 3 0 0 0 1 5 V12 A3 3 0 0 0 3 14.5" fill="none" stroke="#fff" stroke-width="1.1"/><path d="M9 2.5 A3 3 0 0 1 11 5 M9 14.5 A3 3 0 0 0 11 12" fill="none" stroke="#fff" stroke-width="1.1"/><rect x="3" y="6" width="6" height="5.5" rx="1" fill="none" stroke="#fff" stroke-width="1.1"/><path d="M9 8 L12.5 6 V11.5 L9 9.5" fill="none" stroke="#fff" stroke-width="1.1"/><path d="M4.5 0.8 H7.5 M4.5 16.2 H7.5" stroke="#fff" stroke-width="1"/></svg>
  <svg class="a" style="left:1187px;top:11px" width="18" height="18" viewBox="0 0 18 18"><path d="M13 1.5 L16.5 5 L7 14.5 L3.5 15 L4 11.5 Z M11.5 3 L15 6.5" fill="none" stroke="#fff" stroke-width="1.1" stroke-linejoin="round"/><path d="M4 15.5 C2 17 0.8 15.5 2 13.5" fill="none" stroke="#fff" stroke-width="1.1"/><path d="M14 9 C16 9.5 16 11.5 14.5 12" fill="none" stroke="#fff" stroke-width="1.1"/></svg>
  <div class="a" style="left:1217px;top:4px;width:25px;font-size:12px;color:#fff;line-height:17px;text-align:center;white-space:nowrap;letter-spacing:0px">ENG<br>IN</div>
  <div class="a" style="left:1250px;top:4px;width:60px;font-size:12px;color:#fff;line-height:17px;text-align:center;white-space:nowrap">3:10 PM<br>17-Dec-25</div>
  <svg class="a" style="left:1324px;top:12px" width="18" height="18" viewBox="0 0 18 18"><path d="M1.5 1.5 H16.5 V12.5 H11.5 L9 15.5 L6.5 12.5 H1.5 Z" fill="none" stroke="#fff" stroke-width="1.1" stroke-linejoin="round"/></svg>
  <div class="a" style="left:1361px;top:0;width:1px;height:40px;background:#5a5a5a"></div>
</div>
</body></html>
